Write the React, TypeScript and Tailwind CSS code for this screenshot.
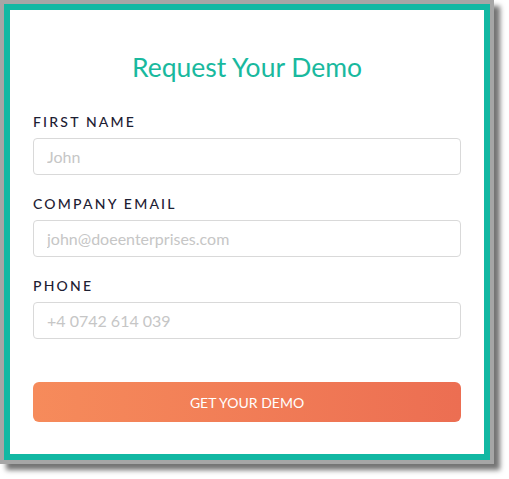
export default function App() {
  const fields = [
    { label: "FIRST NAME", placeholder: "John" },
    { label: "COMPANY EMAIL", placeholder: "john@doeenterprises.com" },
    { label: "PHONE", placeholder: "+4 0742 614 039" },
  ];

  return (
    <div className="w-[509px] h-[479px] bg-white font-['Lato',sans-serif]">
      {/* card frame */}
      <div className="w-[494px] h-[464px] border-4 border-[#a6a6a6] shadow-[6px_6px_5px_rgba(0,0,0,0.55)]">
        <div className="h-full border-[6px] border-[#12b8a3] bg-white px-[23px] pt-[41px]">
          <h1 className="text-center text-[26.5px] leading-[32px] text-[#19b99e]">Request Your Demo</h1>

          <div className="mt-[29px] flex flex-col gap-[19px]">
            {fields.map((f) => (
              <div key={f.label} className="flex flex-col gap-[6px]">
                <label className="text-[14px] leading-[20px] tracking-[2.2px] text-[#1d2033] font-medium">
                  {f.label}
                </label>
                <input
                  placeholder={f.placeholder}
                  className="h-[37px] w-full rounded-[4px] border border-[#d9d9d9] px-[13px] text-[16px] placeholder:text-[#c6c6c6] outline-none"
                />
              </div>
            ))}
          </div>

          <button className="mt-[43px] h-[40px] w-full rounded-[6px] bg-gradient-to-r from-[#f68b5b] to-[#ec6e52] text-[14px] text-white">
            GET YOUR DEMO
          </button>
        </div>
      </div>
    </div>
  );
}
